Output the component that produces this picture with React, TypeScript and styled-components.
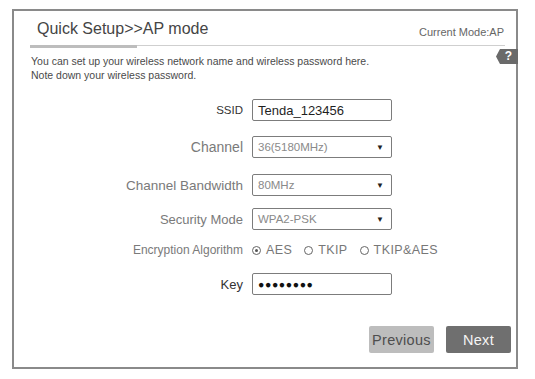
import styled, { createGlobalStyle } from 'styled-components';

const GlobalStyle = createGlobalStyle`
  html, body {
    margin: 0;
    padding: 0;
    background: #ffffff;
  }
  body {
    font-family: 'Liberation Sans', Arial, sans-serif;
  }
`;

const Frame = styled.div`
  position: relative;
  box-sizing: border-box;
  width: 506px;
  height: 360px;
  margin: 9px 0 0 12px;
  border: 2px solid #8a8a8a;
  background: #fff;
  display: flex;
  flex-direction: column;
`;

const Header = styled.div`
  position: relative;
  display: flex;
  align-items: flex-end;
  height: 35px;
  margin: 0 11px 0 16px;
  padding-bottom: 7px;
  box-sizing: border-box;
  border-bottom: 1px solid #cfcfcf;

  &::after {
    content: '';
    position: absolute;
    left: 0;
    bottom: -3px;
    width: 107px;
    height: 3px;
    background: #bdbdbd;
  }
`;

const Title = styled.div`
  padding-left: 7px;
  font-size: 16px;
  color: #454545;
`;

const CurrentMode = styled.div`
  margin-left: auto;
  margin-right: 1px;
  font-size: 11px;
  color: #666;
`;

const HelpBadge = styled.div`
  position: absolute;
  top: 38px;
  right: -2px;
  width: 22px;
  height: 15px;
  background: #6a6a6a;
  clip-path: polygon(4px 0, 100% 0, 100% 100%, 4px 100%, 0 50%);
  color: #fff;
  font-weight: bold;
  font-size: 12px;
  line-height: 15px;
  text-align: center;
  padding-left: 3px;
  box-sizing: border-box;
`;

const Description = styled.p`
  margin: 8px 0 0 17px;
  font-size: 10.5px;
  line-height: 14px;
  color: #4a4a4a;
`;

const Form = styled.div`
  display: flex;
  flex-direction: column;
  margin-top: 17px;
`;

const Row = styled.div<{ $space: number }>`
  display: flex;
  align-items: center;
  height: 22px;
  margin-top: ${(p) => p.$space}px;
`;

const Label = styled.div<{ $size: number; $dark?: boolean }>`
  width: 229px;
  flex-shrink: 0;
  text-align: right;
  margin-right: 9px;
  font-size: ${(p) => p.$size}px;
  color: ${(p) => (p.$dark ? '#333' : '#7a7a7a')};
  white-space: nowrap;
`;

const Box = styled.div`
  box-sizing: border-box;
  width: 140px;
  height: 22px;
  border: 1px solid #7c7c7c;
  border-radius: 2px;
  display: flex;
  align-items: center;
  padding: 0 7px 0 5px;
`;

const InputText = styled.span`
  font-size: 13px;
  color: #1f1f1f;
`;

const SelectText = styled.span`
  font-size: 11.5px;
  color: #8a8a8a;
  flex: 1;
`;

const Arrow = styled.span`
  font-size: 8px;
  color: #222;
`;

const Dots = styled.span`
  font-size: 10.5px;
  letter-spacing: 0.6px;
  color: #111;
  line-height: 1;
`;

const RadioGroup = styled.div`
  display: flex;
  align-items: center;
  gap: 12px;
`;

const RadioItem = styled.label`
  display: flex;
  align-items: center;
  gap: 5px;
  font-size: 12.5px;
  letter-spacing: 0.4px;
  color: #777;
`;

const RadioCircle = styled.span<{ $checked?: boolean }>`
  box-sizing: border-box;
  width: 9px;
  height: 9px;
  border: 1px solid #666;
  border-radius: 50%;
  display: flex;
  align-items: center;
  justify-content: center;

  &::after {
    content: '';
    width: 3px;
    height: 3px;
    border-radius: 50%;
    background: ${(p) => (p.$checked ? '#555' : 'transparent')};
  }
`;

const Actions = styled.div`
  display: flex;
  justify-content: flex-end;
  gap: 12px;
  margin-top: 31px;
  padding-right: 5px;
`;

const Button = styled.button<{ $primary?: boolean }>`
  width: 65px;
  height: 27px;
  border: none;
  border-radius: 2px;
  font-family: 'Liberation Sans', Arial, sans-serif;
  font-size: 14.5px;
  letter-spacing: 0.3px;
  background: ${(p) => (p.$primary ? '#6f6f6f' : '#bdbdbd')};
  color: ${(p) => (p.$primary ? '#f5f5f5' : '#4e4e4e')};
  padding: 0;
`;

const Select = ({ value }: { value: string }) => (
  <Box>
    <SelectText>{value}</SelectText>
    <Arrow>▼</Arrow>
  </Box>
);

const App = () => {
  return (
    <>
      <GlobalStyle />
      <Frame>
        <Header>
          <Title>Quick Setup&gt;&gt;AP mode</Title>
          <CurrentMode>Current Mode:AP</CurrentMode>
        </Header>
        <HelpBadge>?</HelpBadge>
        <Description>
          You can set up your wireless network name and wireless password here.
          <br />
          Note down your wireless password.
        </Description>
        <Form>
          <Row $space={0}>
            <Label $size={11.5} $dark>
              SSID
            </Label>
            <Box>
              <InputText>Tenda_123456</InputText>
            </Box>
          </Row>
          <Row $space={15}>
            <Label $size={14}>Channel</Label>
            <Select value="36(5180MHz)" />
          </Row>
          <Row $space={16}>
            <Label $size={13.5}>Channel Bandwidth</Label>
            <Select value="80MHz" />
          </Row>
          <Row $space={12}>
            <Label $size={13}>Security Mode</Label>
            <Select value="WPA2-PSK" />
          </Row>
          <Row $space={9}>
            <Label $size={12}>Encryption Algorithm</Label>
            <RadioGroup>
              <RadioItem>
                <RadioCircle $checked />
                AES
              </RadioItem>
              <RadioItem>
                <RadioCircle />
                TKIP
              </RadioItem>
              <RadioItem>
                <RadioCircle />
                TKIP&amp;AES
              </RadioItem>
            </RadioGroup>
          </Row>
          <Row $space={12}>
            <Label $size={13} $dark>
              Key
            </Label>
            <Box>
              <Dots>●●●●●●●●</Dots>
            </Box>
          </Row>
        </Form>
        <Actions>
          <Button>Previous</Button>
          <Button $primary>Next</Button>
        </Actions>
      </Frame>
    </>
  );
};

export default App;
